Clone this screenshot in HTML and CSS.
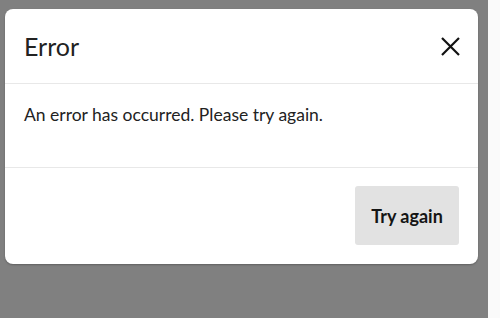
FILE: index.html
```html
<!DOCTYPE html>
<html>
<head>
<meta charset="utf-8">
<link rel="stylesheet" href="styles.css">
</head>
<body>
<div class="page">
  <div class="overlay">
    <div class="modal">
      <div class="modal-header">
        <h1 class="modal-title">Error</h1>
        <button class="close-btn" aria-label="Close">
          <svg width="19" height="19" viewBox="0 0 19 19"><path d="M1 1L18 18M18 1L1 18" stroke="#111" stroke-width="2.2" fill="none"/></svg>
        </button>
      </div>
      <div class="modal-body">An error has occurred. Please try again.</div>
      <div class="modal-footer">
        <button class="retry-btn">Try again</button>
      </div>
    </div>
  </div>
  <div class="side-strip"></div>
</div>
</body>
</html>
```
FILE: styles.css
```css
html, body {
  margin: 0;
  padding: 0;
  height: 100%;
}
body {
  font-family: Lato, "Open Sans", sans-serif;
  color: #1a1a1a;
  background: #808080;
}
.page {
  display: flex;
  height: 318px;
}
.overlay {
  width: 488px;
  background: #808080;
  padding: 9px 0 0 5px;
  box-sizing: border-box;
}
.side-strip {
  flex: 1;
  background: #fafafa;
}
.modal {
  width: 473px;
  height: 255px;
  background: #fff;
  border-radius: 8px;
  box-shadow: 0 1px 2px rgba(0,0,0,0.25);
  display: flex;
  flex-direction: column;
}
.modal-header {
  height: 74px;
  display: flex;
  align-items: center;
  justify-content: space-between;
  padding: 0 18px 0 19px;
  border-bottom: 1px solid #e8e8e8;
}
.modal-title {
  margin: 0;
  font-size: 25px;
  font-weight: 400;
  line-height: 30px;
  color: #222;
}
.close-btn {
  border: 0;
  background: none;
  padding: 0;
  width: 19px;
  height: 19px;
  display: flex;
}
.modal-body {
  padding: 19px 19px 40px;
  font-size: 17.5px;
  line-height: 24px;
  color: #222;
  border-bottom: 1px solid #e8e8e8;
}
.modal-footer {
  flex: 1;
  display: flex;
  justify-content: flex-end;
  align-items: flex-start;
  padding: 18px 19px 0 0;
}
.retry-btn {
  width: 104px;
  height: 59px;
  border: 0;
  border-radius: 3px;
  background: #e2e2e2;
  font-family: Lato, sans-serif;
  font-weight: 700;
  font-size: 18px;
  color: #151515;
}
```
